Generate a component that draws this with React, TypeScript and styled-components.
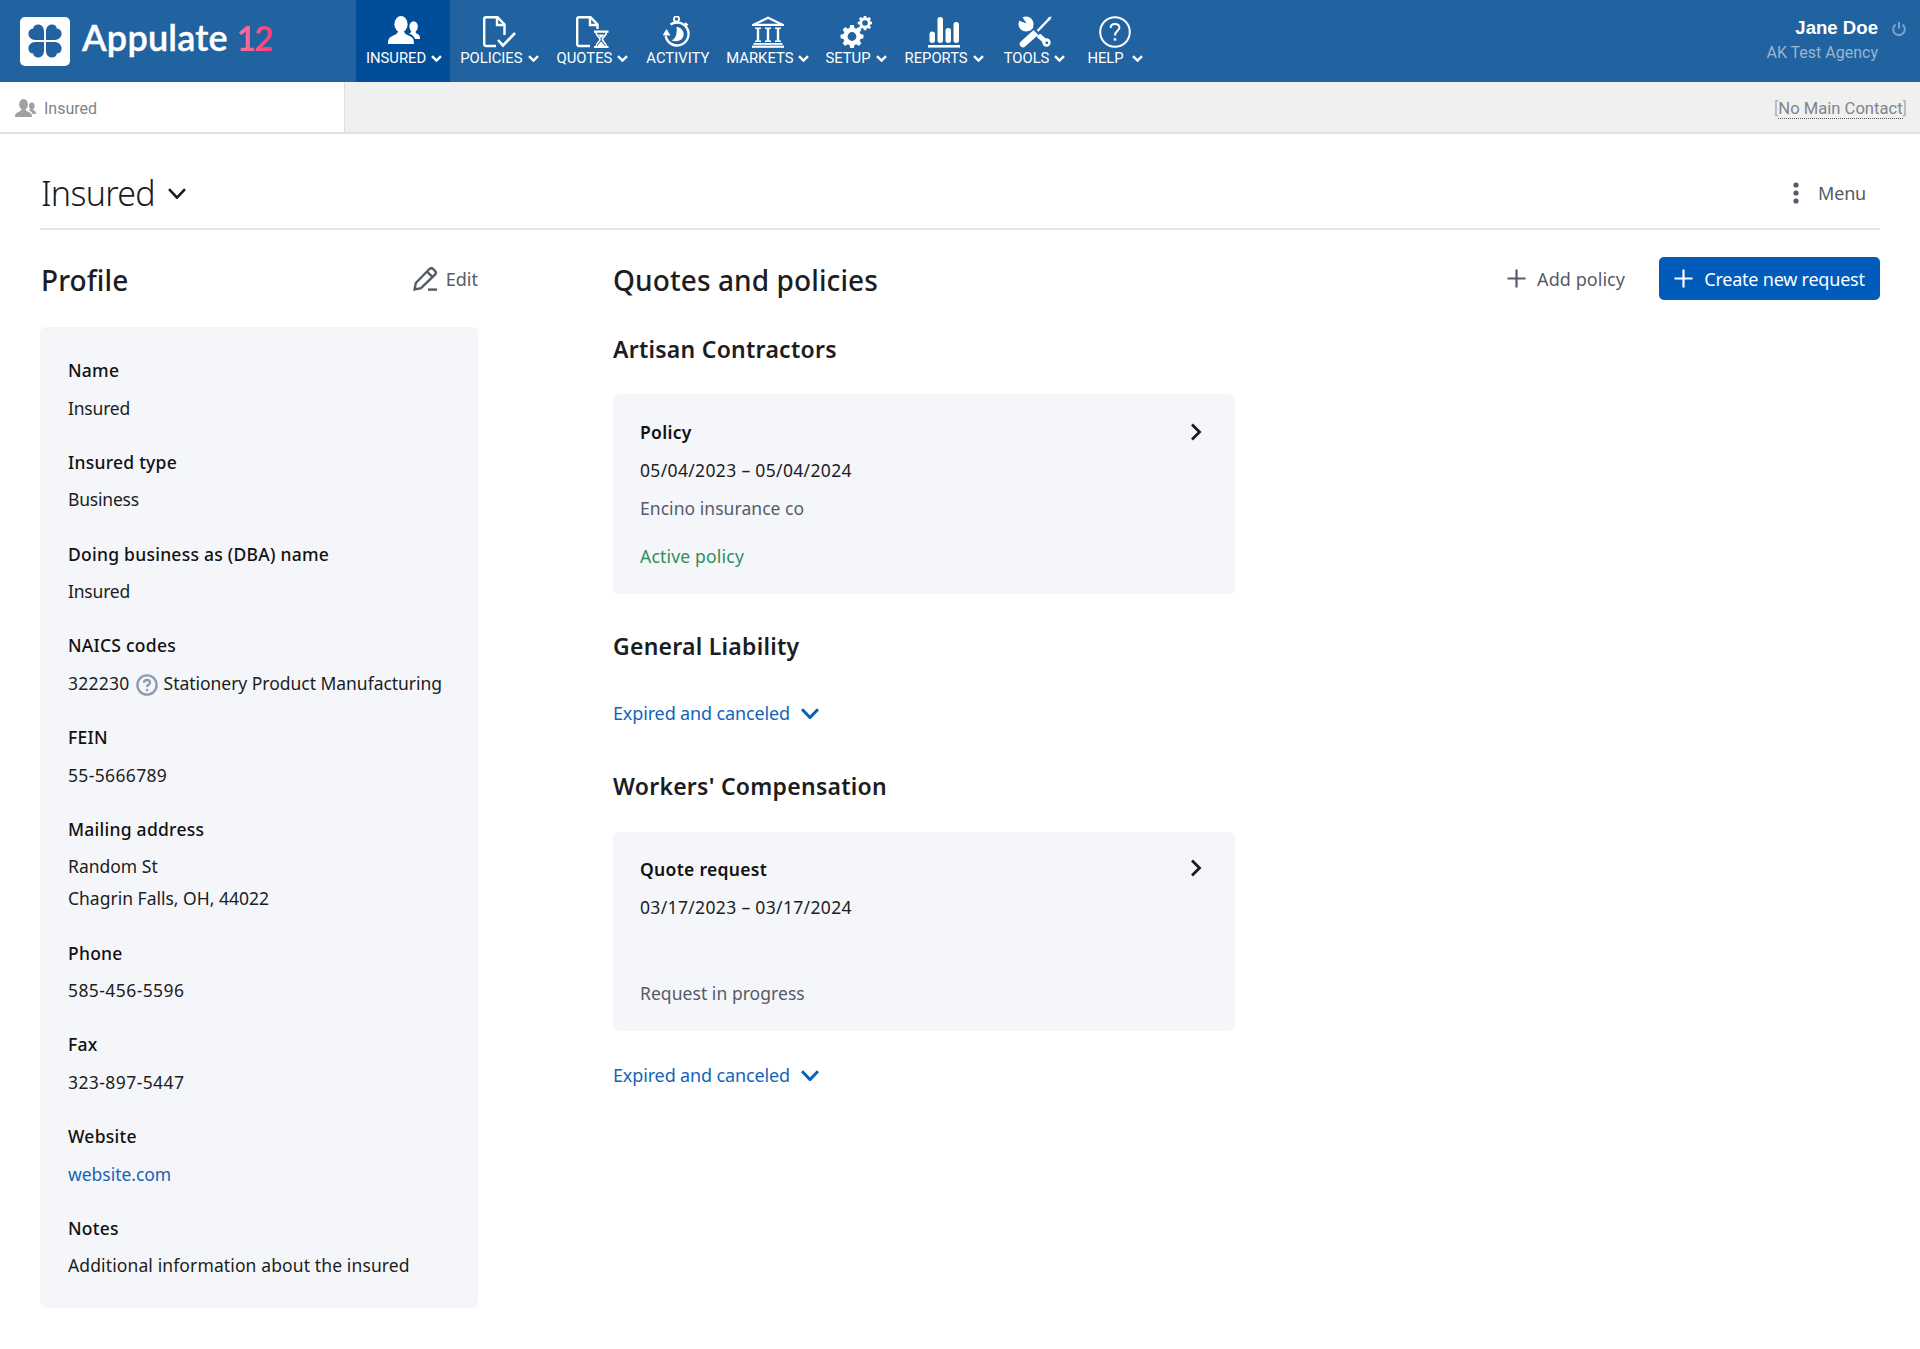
import React from "react";
import styled, { createGlobalStyle } from "styled-components";

const Global = createGlobalStyle`
  html, body { margin: 0; padding: 0; background: #fff; }
  body { font-family: "Noto Sans", "Open Sans", sans-serif; color: #1b1d21; min-height: 1349px; }
  * { box-sizing: border-box; }
`;

const NavBar = styled.header`
  display: flex; height: 82px; background: #2162a1; color: #fff; position: relative;
`;
const Brand = styled.div`
  width: 356px; display: flex; align-items: center; padding-left: 20px; gap: 12px;
`;
const LogoTile = styled.div`
  width: 50px; height: 49px; border-radius: 5px; background: #fff; display: flex; align-items: center; justify-content: center;
`;
const BrandText = styled.span`
  font-family: "Lato", sans-serif; font-size: 36px; font-weight: 600; letter-spacing: 0.2px; color: #fff; margin-top: -8px;
  -webkit-text-stroke: 0.4px #fff;
`;
const BrandNum = styled.span`
  font-size: 34px; font-weight: 700; margin-left: 9px; letter-spacing: -2px; -webkit-text-stroke: 0;
  background: linear-gradient(90deg, #f8789f, #f33f75);
  -webkit-background-clip: text; background-clip: text; color: transparent;
`;
const NavItem = styled.div<{ $active?: boolean; $extra?: number; $noChevron?: boolean }>`
  display: flex; flex-direction: column; align-items: center;
  padding: 16px ${p => (p.$noChevron ? "10px" : "8px")} 0 10px;
  margin-left: ${p => p.$extra ?? 0}px;
  background: ${p => (p.$active ? "#004e9a" : "transparent")};
`;
const IconSlot = styled.div`
  height: 32px; display: flex; align-items: flex-start; justify-content: center;
`;
const NavLabel = styled.div`
  margin-top: 1px; display: flex; align-items: center; gap: 5px; height: 18px;
  font-family: "Roboto", sans-serif; font-size: 14.8px; line-height: 18px; white-space: pre; color: #fff;
`;
const UserBox = styled.div`
  margin-left: auto; width: 200px; padding: 17px 42px 0 0; text-align: right; position: relative;
  font-family: "Liberation Sans", sans-serif;
`;
const UserName = styled.div`
  font-weight: 700; font-size: 18.6px; line-height: 22px; color: #fff;
`;
const UserOrg = styled.div`
  font-family: "Roboto", sans-serif; font-size: 16px; line-height: 22px; margin-top: 3px; color: #9bb5d1; white-space: nowrap;
`;
const PowerSlot = styled.span`
  position: absolute; right: 14px; top: 21px; display: flex;
`;

const SubBar = styled.div`
  height: 52px; display: flex; background: #f0f0f0; border-bottom: 2px solid #e0e0e0;
`;
const SubTab = styled.div`
  width: 345px; height: 100%; background: #fff; border-right: 1px solid #ddd; display: flex; align-items: center; gap: 8px; padding: 2px 0 0 15px;
  font-family: "Roboto", sans-serif; font-size: 16px; color: #80848a;
`;
const SubRight = styled.div`
  margin-left: auto; padding: 2px 13px 0 0; align-self: center;
  font-family: "Roboto", sans-serif; font-size: 16.6px; color: #b0b0b0;
`;
const Dotted = styled.span`
  color: #80848a; border-bottom: 1px dotted #555;
`;

const Page = styled.main`
  padding: 0 40px;
`;
const TitleRow = styled.div`
  height: 96px; display: flex; align-items: center; justify-content: space-between; border-bottom: 2px solid #e3e6ee;
  padding-top: 24px;
`;
const TitleLeft = styled.div`
  display: flex; align-items: center; gap: 13px; padding-left: 1px;
`;
const PageTitle = styled.h1`
  margin: 0; font-size: 34px; font-weight: 300; line-height: 46px; letter-spacing: -0.7px; color: #1b1d21;
`;
const MenuButton = styled.div`
  display: flex; align-items: center; gap: 19px; padding-right: 14px; font-size: 18px; letter-spacing: -0.2px; color: #555b68;
`;
const Columns = styled.div`
  display: grid; grid-template-columns: 438px 1fr; gap: 135px;
`;
const SectionHead = styled.div`
  height: 97px; display: flex; align-items: center; justify-content: space-between; padding-top: 2px;
`;
const SectionTitle = styled.h2<{ $flush?: boolean }>`
  margin: 0 0 0 ${p => (p.$flush ? 0 : 1)}px; font-size: 28px; font-weight: 500; line-height: 40px; letter-spacing: 0.1px; color: #1b1d21;
`;
const Ghost = styled.div<{ $gap: number }>`
  display: flex; align-items: center; gap: ${p => p.$gap}px; font-size: 18px; letter-spacing: 0.05px; color: #555b68;
`;
const EditLink = styled(Ghost)`
  margin-top: -2px; letter-spacing: 0;
`;
const ProfileCard = styled.section`
  background: #f5f6fa; border-radius: 6px; padding: 24px 27px 23px 28px;
`;
const Field = styled.div`
  & + & { margin-top: 15.75px; }
`;
const FieldLabel = styled.div`
  font-size: 17.5px; font-weight: 500; line-height: 38px; letter-spacing: 0.25px; color: #111;
`;
const FieldValues = styled.div`
  padding: 2.5px 0;
`;
const FieldValue = styled.div<{ $spacing?: number }>`
  font-size: 17.5px; line-height: 33px; height: 33px; letter-spacing: ${p => p.$spacing ?? -0.03}px; color: #1b1d21;
  white-space: nowrap;
  & + & { margin-top: -1px; }
`;
const LinkText = styled.span`
  color: #1463b8;
`;
const HelpWrap = styled.span`
  display: inline-block; height: 22px; vertical-align: -6px; margin: 0 6px;
`;
const Digits = styled.span`
  letter-spacing: 0.25px;
`;
const RightHead = styled(SectionHead)`
  margin-bottom: 7px;
`;
const Actions = styled.div`
  display: flex; align-items: center; gap: 34px; margin-top: -2px;
`;
const PrimaryBtn = styled.button`
  width: 221px; height: 43px; border: 0; border-radius: 5px; background: #005bbb; color: #fff; display: flex; align-items: center; justify-content: center; gap: 11px;
  font-family: inherit; font-size: 18px; letter-spacing: -0.22px;
`;
const GroupTitle = styled.h3<{ $mt?: number }>`
  margin: ${p => p.$mt ?? 0}px 0 0; font-size: 23px; font-weight: 600; line-height: 30px; letter-spacing: 0.25px; color: #1b1d21;
`;
const PolicyCard = styled.article<{ $mt: number; $pt: number; $pb: number }>`
  position: relative; width: 622px; margin-top: ${p => p.$mt}px; padding: ${p => p.$pt}px 27px ${p => p.$pb}px; background: #f5f6fa; border-radius: 6px;
`;
const CardTitle = styled.div`
  font-size: 17.5px; font-weight: 600; line-height: 38px; letter-spacing: 0.3px; color: #111;
`;
const CardLine = styled.div<{ $tone?: "muted" | "green"; $mt?: number; $digits?: boolean }>`
  font-size: 17.5px; line-height: 38px; min-height: 38px;
  letter-spacing: ${p => (p.$digits ? "0.34px" : p.$tone === "green" ? "0.2px" : "0.05px")};
  margin-top: ${p => p.$mt ?? 0}px;
  color: ${p => (p.$tone === "muted" ? "#555b68" : p.$tone === "green" ? "#2c8f5b" : "#1b1d21")};
`;
const CardArrow = styled.span<{ $top: number }>`
  position: absolute; top: ${p => p.$top}px; right: 33px; display: flex;
`;
const Expander = styled.div<{ $mt: number }>`
  display: flex; align-items: center; gap: 11px; margin-top: ${p => p.$mt}px; line-height: 30px;
  font-size: 18px; letter-spacing: -0.14px; color: #1463b8;
`;

/* ---------- drawings ---------- */
const BLUE = "#2162a1";
const Chev = ({ w = 11, h = 7, color = "#fff", sw = 2.4 }: { w?: number; h?: number; color?: string; sw?: number }) => (
  <svg width={w} height={h} viewBox={`0 0 ${w} ${h}`} fill="none">
    <polyline points={`1,1.2 ${w / 2},${h - 1.4} ${w - 1},1.2`} stroke={color} strokeWidth={sw} />
  </svg>
);

const People = ({ size = 32, color = "#fff" }: { size?: number; color?: string }) => (
  <svg width={size} height={(size * 28) / 32} viewBox="0 0 32 28" fill={color}>
    <ellipse cx="13" cy="8.2" rx="6.6" ry="8.2" />
    <path d="M9.8 15.5 C9.6 18 7 18.8 3.6 20.4 C1 21.6 0 23.6 0 28 H26 C26 23.6 25 21.6 22.4 20.4 C19 18.8 16.4 18 16.2 15.5 Z" />
    <ellipse cx="25.6" cy="10.6" rx="4.2" ry="5.4" />
    <path d="M23.4 15 C23.2 16.6 22 17 20.8 17.6 C23.6 18.6 26 20 27 23 H32 C32 20 31.4 18.8 29.6 18 C27.8 17.2 27.6 16.6 27.6 15 Z" />
  </svg>
);

const Doc = () => (
  <g fill="none" stroke="#fff" strokeWidth="2.4">
    <path d="M14 30 H3 a1.8 1.8 0 0 1 -1.8 -1.8 V3 A1.8 1.8 0 0 1 3 1.2 H14.5 L21.5 8.5 V13" />
    <path d="M14 1.2 V9 H21.5" />
  </g>
);
const PolicyIcon = () => (
  <svg width="33" height="32" viewBox="0 0 33 32">
    <g fill="none" stroke="#fff" strokeWidth="2.4">
      <path d="M13 30 H3 a1.8 1.8 0 0 1 -1.8 -1.8 V3 A1.8 1.8 0 0 1 3 1.2 H14.5 L21.5 8.5 V19" />
      <path d="M14 1.2 V9 H21.5" />
    </g>
    <path d="M15 24 L20 29.5 L32 17" fill="none" stroke="#fff" strokeWidth="2.6" />
  </svg>
);
const QuoteIcon = () => (
  <svg width="33" height="32" viewBox="0 0 33 32">
    <Doc />
    <path d="M18 15.6 H32.5 M18 31 H32.5" stroke="#fff" strokeWidth="2.2" />
    <path d="M20 16 C20 20.5 24 21 24 23.4 C24 25.8 20 26.5 20 31 M30.5 16 C30.5 20.5 26.5 21 26.5 23.4 C26.5 25.8 30.5 26.5 30.5 31" fill="none" stroke="#fff" strokeWidth="1.6" />
    <path d="M22 18.5 H28.5 L25.2 22.2 Z M21.5 30.5 C22 28 24.2 27 25.2 25.4 C26.2 27 28.4 28 29 30.5 Z" fill="#fff" />
  </svg>
);
const ActivityIcon = () => (
  <svg width="30" height="32" viewBox="0 0 30 32" fill="none" stroke="#fff">
    <circle cx="13.5" cy="3" r="2.6" strokeWidth="1.9" />
    <path d="M13.5 5.5 V7" strokeWidth="2.2" />
    <path d="M7.5 8.5 A11.5 11.5 0 1 1 2.7 20" strokeWidth="2.4" />
    <path d="M22 7 L24.5 9.5" strokeWidth="2.4" />
    <path d="M3.5 13 L-0.5 19.5 H7.5 Z" fill="#fff" stroke="none" />
    <path d="M13.5 11 C19 11.5 21.5 16 20.5 20 C19.5 24 15 26.5 8.5 24.5 C12.5 23 14.5 18 13.5 11 Z" fill="#fff" stroke="none" />
  </svg>
);
const MarketIcon = () => (
  <svg width="32" height="32" viewBox="0 0 32 32" fill="#fff">
    <path d="M16 0.5 L32 8.2 V10 H0 V8.2 Z M16 3 L6 7.8 H26 Z" fillRule="evenodd" />
    <path d="M3 11.5 H9 V13 H7.2 V24.5 H9 V26 H3 V24.5 H4.8 V13 H3 Z" />
    <path d="M13 11.5 H19 V13 H17.2 V24.5 H19 V26 H13 V24.5 H14.8 V13 H13 Z" />
    <path d="M23 11.5 H29 V13 H27.2 V24.5 H29 V26 H23 V24.5 H24.8 V13 H23 Z" />
    <rect x="1.5" y="27" width="29" height="1.8" />
    <rect x="0" y="29.6" width="32" height="2.2" />
  </svg>
);
const gearPath = (cx: number, cy: number, ro: number, ri: number, hole: number, teeth: number) => {
  const pts: string[] = [];
  for (let i = 0; i < teeth; i++) {
    const a = (i * 2 * Math.PI) / teeth;
    const s = (Math.PI * 2) / teeth;
    const at = (r: number, t: number) => `${(cx + r * Math.cos(t)).toFixed(2)} ${(cy + r * Math.sin(t)).toFixed(2)}`;
    pts.push(`${i === 0 ? "M" : "L"}${at(ri, a - s * 0.36)}`, `L${at(ro, a - s * 0.2)}`, `L${at(ro, a + s * 0.2)}`, `L${at(ri, a + s * 0.36)}`);
  }
  const ring = `M${cx + hole} ${cy} a${hole} ${hole} 0 1 0 ${-2 * hole} 0 a${hole} ${hole} 0 1 0 ${2 * hole} 0 Z`;
  return pts.join(" ") + " Z " + ring;
};
const SetupIcon = () => (
  <svg width="32" height="32" viewBox="0 0 32 32" fill="#fff">
    <path fillRule="evenodd" d={gearPath(12, 20.5, 11.6, 8.8, 4.4, 8)} />
    <path fillRule="evenodd" d={gearPath(25, 7, 7.4, 5.6, 2.8, 8)} />
  </svg>
);
const ReportIcon = () => (
  <svg width="32" height="32" viewBox="0 0 32 32" fill="#fff">
    <rect x="1.5" y="15.5" width="5.5" height="11.5" rx="2.7" />
    <rect x="9.5" y="1" width="5.5" height="26" rx="2.7" />
    <rect x="17.5" y="12" width="5.5" height="15" rx="2.7" />
    <rect x="25.5" y="6" width="5.5" height="21" rx="2.7" />
    <rect x="0" y="29" width="32" height="2.6" />
  </svg>
);
const ToolsIcon = () => (
  <svg width="34" height="32" viewBox="0 0 34 32" fill="none" stroke="#fff">
    <circle cx="8" cy="8" r="7.6" fill="#fff" stroke="none" />
    <path d="M8.6 7.6 L3 -1 L-1.5 3.6 Z" fill={BLUE} stroke="none" />
    <path d="M9 9 L28.5 26.5" strokeWidth="5" />
    <circle cx="28.5" cy="26.5" r="4.2" fill="#fff" stroke="none" />
    <circle cx="28.8" cy="26.8" r="1.4" fill={BLUE} stroke="none" />
    <path d="M20 13.5 L5.5 27" stroke={BLUE} strokeWidth="9" />
    <path d="M31.5 2.5 L19.5 15" strokeWidth="2.5" />
    <path d="M33.6 0.2 L29.6 1.8 L32 4.4 Z" fill="#fff" stroke="none" />
    <path d="M15 19 L5 28" strokeWidth="6.6" strokeLinecap="round" />
    <path d="M14.6 14.8 L19.6 19.8" strokeWidth="2.4" />
  </svg>
);
const HelpNavIcon = () => (
  <svg width="32" height="32" viewBox="0 0 32 32" fill="none" stroke="#fff" strokeWidth="2">
    <circle cx="16" cy="16" r="14.8" />
    <path d="M11.6 12 C11.6 9.4 13.4 8 16 8 C18.6 8 20.4 9.6 20.4 11.8 C20.4 14.8 16 15 16 19.4" />
    <circle cx="16" cy="23.4" r="1.4" fill="#fff" stroke="none" />
  </svg>
);
const Clover = () => (
  <svg width="34" height="34" viewBox="0 0 34 34" fill={BLUE}>
    <path d="M16 16 H7.5 C3 16 0.4 13 0.4 9.6 C0.4 6.6 2.4 4.6 5.2 4.4 C5.4 2 7.6 0.4 10 0.4 C13.4 0.4 16 3 16 7.5 Z" />
    <path d="M18 16 H26.5 C31 16 33.6 13 33.6 9.6 C33.6 6.6 31.6 4.6 28.8 4.4 C28.6 2 26.4 0.4 24 0.4 C20.6 0.4 18 3 18 7.5 Z" />
    <path d="M16 18 H7.5 C3 18 0.4 21 0.4 24.4 C0.4 27.4 2.4 29.4 5.2 29.6 C5.4 32 7.6 33.6 10 33.6 C13.4 33.6 16 31 16 26.5 Z" />
    <path d="M18 18 H26.5 C31 18 33.6 21 33.6 24.4 C33.6 27.4 31.6 29.4 28.8 29.6 C28.6 32 26.4 33.6 24 33.6 C20.6 33.6 18 31 18 26.5 Z" />
  </svg>
);
const Power = () => (
  <svg width="14" height="15" viewBox="0 0 14 15" fill="none" stroke="#7ea3ca" strokeWidth="2">
    <path d="M7 1 V7.5" />
    <path d="M3.6 3.6 A5.8 5.8 0 1 0 10.4 3.6" />
  </svg>
);
const Dots = () => (
  <svg width="6" height="22" viewBox="0 0 6 22" fill="#555b68">
    <circle cx="3" cy="3" r="2.6" />
    <circle cx="3" cy="11" r="2.6" />
    <circle cx="3" cy="19" r="2.6" />
  </svg>
);
const Pencil = () => (
  <svg width="25" height="24" viewBox="0 0 25 24" fill="none" stroke="#555b68" strokeWidth="2.4">
    <path d="M1.6 22.4 L2.8 16 L16.4 2 C17.6 0.9 19 0.9 20.2 2 L22 3.8 C23.1 5 23.1 6.4 22 7.6 L8 21.2 Z" />
    <path d="M14 4.6 L19.6 10.2" />
    <path d="M15 22.6 H24" />
  </svg>
);
const Plus = ({ color, size = 19 }: { color: string; size?: number }) => (
  <svg width={size} height={size} viewBox="0 0 19 19" fill="none" stroke={color} strokeWidth="2.2">
    <path d="M9.5 0.5 V18.5 M0.5 9.5 H18.5" />
  </svg>
);
const HelpSmall = () => (
  <svg width="22" height="22" viewBox="0 0 22 22" fill="none" stroke="#8f9bae" strokeWidth="2.4">
    <circle cx="11" cy="11" r="9.6" />
    <path d="M8 8.8 C8 7 9.2 6 11 6 C12.8 6 14 7 14 8.6 C14 10.6 11 10.8 11 13" />
    <circle cx="11" cy="16" r="1.3" fill="#8f9bae" stroke="none" />
  </svg>
);
const CardChevron = () => (
  <svg width="12" height="18" viewBox="0 0 12 18" fill="none" stroke="#1b1d21" strokeWidth="2.8">
    <polyline points="2,1.5 9.5,9 2,16.5" />
  </svg>
);

const nav = [
  { label: "INSURED", icon: <People />, active: true, chev: true },
  { label: "POLICIES", icon: <PolicyIcon />, chev: true },
  { label: "QUOTES", icon: <QuoteIcon />, chev: true },
  { label: "ACTIVITY", icon: <ActivityIcon />, chev: false },
  { label: "MARKETS", icon: <MarketIcon />, chev: true, extra: -3 },
  { label: "SETUP", icon: <SetupIcon />, chev: true, extra: -2 },
  { label: "REPORTS", icon: <ReportIcon />, chev: true, extra: 0 },
  { label: "TOOLS", icon: <ToolsIcon />, chev: true, extra: 2 },
  { label: "HELP ", icon: <HelpNavIcon />, chev: true, extra: 4 },
];

const fields: { label: string; lines: React.ReactNode[]; spacing?: number }[] = [
  { label: "Name", lines: ["Insured"], spacing: -0.2 },
  { label: "Insured type", lines: ["Business"], spacing: -0.2 },
  { label: "Doing business as (DBA) name", lines: ["Insured"], spacing: -0.2 },
  {
    label: "NAICS codes",
    lines: [
      <>
        <Digits>322230</Digits><HelpWrap><HelpSmall /></HelpWrap>Stationery Product Manufacturing
      </>,
    ],
  },
  { label: "FEIN", lines: ["55-5666789"], spacing: 0.35 },
  { label: "Mailing address", lines: ["Random St", "Chagrin Falls, OH, 44022"], spacing: 0 },
  { label: "Phone", lines: ["585-456-5596"], spacing: 0.42 },
  { label: "Fax", lines: ["323-897-5447"], spacing: 0.42 },
  { label: "Website", lines: [<LinkText>website.com</LinkText>] },
  { label: "Notes", lines: ["Additional information about the insured"], spacing: 0.12 },
];

export default function App() {
  return (
    <>
      <Global />
      <NavBar>
        <Brand>
          <LogoTile><Clover /></LogoTile>
          <BrandText>Appulate<BrandNum>12</BrandNum></BrandText>
        </Brand>
        {nav.map(n => (
          <NavItem key={n.label} $active={n.active} $extra={n.extra} $noChevron={!n.chev}>
            <IconSlot>{n.icon}</IconSlot>
            <NavLabel>
              {n.label}
              {n.chev && <Chev />}
            </NavLabel>
          </NavItem>
        ))}
        <UserBox>
          <UserName>Jane Doe</UserName>
          <UserOrg>AK Test Agency</UserOrg>
          <PowerSlot><Power /></PowerSlot>
        </UserBox>
      </NavBar>
      <SubBar>
        <SubTab><People size={21} color="#a0a0a0" />Insured</SubTab>
        <SubRight>[<Dotted>No Main Contact</Dotted>]</SubRight>
      </SubBar>
      <Page>
        <TitleRow>
          <TitleLeft>
            <PageTitle>Insured</PageTitle>
            <Chev w={18} h={11} color="#1b1d21" sw={2.6} />
          </TitleLeft>
          <MenuButton><Dots />Menu</MenuButton>
        </TitleRow>
        <Columns>
          <div>
            <SectionHead>
              <SectionTitle>Profile</SectionTitle>
              <EditLink $gap={8}><Pencil />Edit</EditLink>
            </SectionHead>
            <ProfileCard>
              {fields.map(f => (
                <Field key={f.label}>
                  <FieldLabel>{f.label}</FieldLabel>
                  <FieldValues>
                    {f.lines.map((l, i) => (
                      <FieldValue key={i} $spacing={f.spacing}>{l}</FieldValue>
                    ))}
                  </FieldValues>
                </Field>
              ))}
            </ProfileCard>
          </div>
          <div>
            <RightHead>
              <SectionTitle $flush>Quotes and policies</SectionTitle>
              <Actions>
                <Ghost $gap={11}><Plus color="#555b68" />Add policy</Ghost>
                <PrimaryBtn><Plus color="#fff" />Create new request</PrimaryBtn>
              </Actions>
            </RightHead>
            <GroupTitle>Artisan Contractors</GroupTitle>
            <PolicyCard $mt={30} $pt={19} $pb={19}>
              <CardTitle>Policy</CardTitle>
              <CardArrow $top={29}><CardChevron /></CardArrow>
              <CardLine $digits>05/04/2023 – 05/04/2024</CardLine>
              <CardLine $tone="muted">Encino insurance co</CardLine>
              <CardLine $tone="green" $mt={10}>Active policy</CardLine>
            </PolicyCard>
            <GroupTitle $mt={37}>General Liability</GroupTitle>
            <Expander $mt={37}>Expired and canceled <Chev w={18} h={11} color="#0f5fb5" sw={3} /></Expander>
            <GroupTitle $mt={43}>Workers' Compensation</GroupTitle>
            <PolicyCard $mt={31} $pt={18} $pb={19}>
              <CardTitle>Quote request</CardTitle>
              <CardArrow $top={27}><CardChevron /></CardArrow>
              <CardLine $digits>03/17/2023 – 03/17/2024</CardLine>
              <CardLine />
              <CardLine $tone="muted" $mt={10}>Request in progress</CardLine>
            </PolicyCard>
            <Expander $mt={29}>Expired and canceled <Chev w={18} h={11} color="#0f5fb5" sw={3} /></Expander>
          </div>
        </Columns>
      </Page>
    </>
  );
}
